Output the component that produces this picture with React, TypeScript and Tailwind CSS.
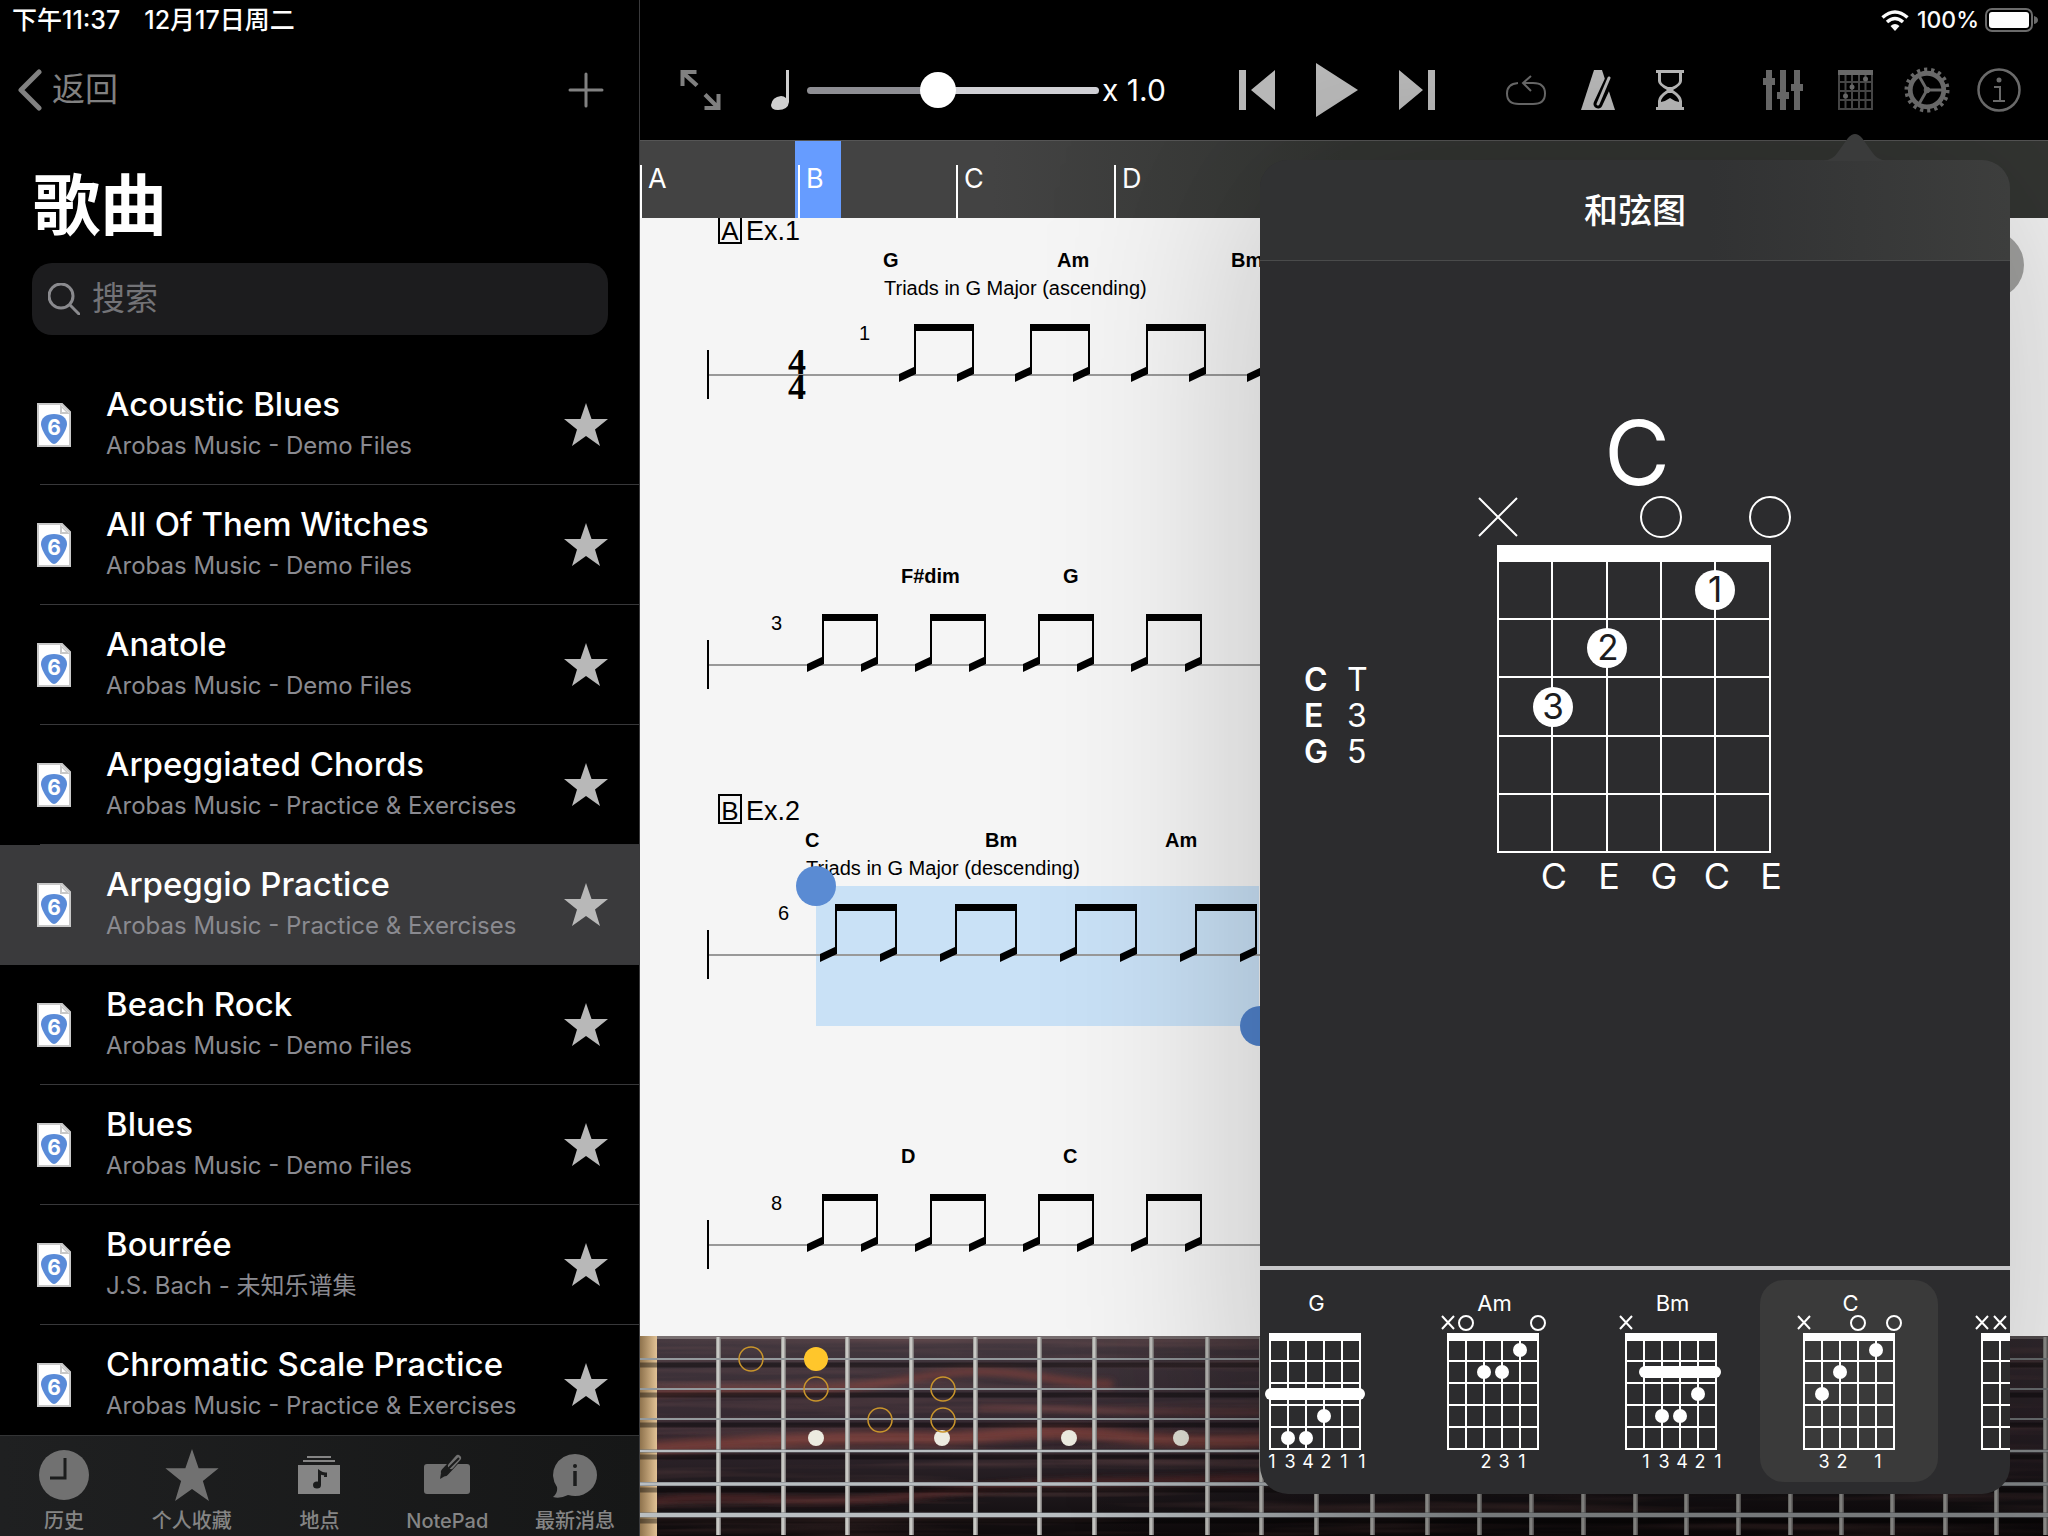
import React, { useState } from 'react';

interface Song {
    title: string;
    source: string;
}

interface Chord {
    name: string;
    marks: string[];
    dots: { string: number; fret: number }[];
    bar?: { from: number; fret: number };
    fingers: string[];
}

interface StaffLine {
    y: number;
    number: string;
    numberX: number;
    stems: number[];
    stemWidth: number;
    chords: { x: number; label: string }[];
    chordRise: number;
}

const SONGS: Song[] = [
    { title: 'Acoustic Blues', source: 'Arobas Music - Demo Files' },
    { title: 'All Of Them Witches', source: 'Arobas Music - Demo Files' },
    { title: 'Anatole', source: 'Arobas Music - Demo Files' },
    { title: 'Arpeggiated Chords', source: 'Arobas Music - Practice & Exercises' },
    { title: 'Arpeggio Practice', source: 'Arobas Music - Practice & Exercises' },
    { title: 'Beach Rock', source: 'Arobas Music - Demo Files' },
    { title: 'Blues', source: 'Arobas Music - Demo Files' },
    { title: 'Bourrée', source: 'J.S. Bach - 未知乐谱集' },
    { title: 'Chromatic Scale Practice', source: 'Arobas Music - Practice & Exercises' }
];

const SECTIONS = ['A', 'B', 'C', 'D'];

const CHORDS: Chord[] = [
    {
        name: 'G',
        marks: ['', '', '', '', '', ''],
        dots: [{ string: 3, fret: 4 }, { string: 1, fret: 5 }, { string: 2, fret: 5 }],
        bar: { from: 0, fret: 3 },
        fingers: ['1', '3', '4', '2', '1', '1']
    },
    {
        name: 'Am',
        marks: ['x', 'o', '', '', '', 'o'],
        dots: [{ string: 4, fret: 1 }, { string: 2, fret: 2 }, { string: 3, fret: 2 }],
        fingers: ['', '', '2', '3', '1', '']
    },
    {
        name: 'Bm',
        marks: ['x', '', '', '', '', ''],
        dots: [{ string: 4, fret: 3 }, { string: 2, fret: 4 }, { string: 3, fret: 4 }],
        bar: { from: 1, fret: 2 },
        fingers: ['', '1', '3', '4', '2', '1']
    },
    {
        name: 'C',
        marks: ['x', '', '', 'o', '', 'o'],
        dots: [{ string: 4, fret: 1 }, { string: 2, fret: 2 }, { string: 1, fret: 3 }],
        fingers: ['', '3', '2', '', '1', '']
    },
    {
        name: '',
        marks: ['x', 'x', '', '', '', ''],
        dots: [{ string: 3, fret: 2 }, { string: 5, fret: 2 }, { string: 4, fret: 3 }],
        fingers: []
    }
];

const STAFF_LINES: StaffLine[] = [
    {
        y: 157, number: '1', numberX: 219, stems: [275, 391, 507, 623], stemWidth: 58, chordRise: 108,
        chords: [{ x: 243, label: 'G' }, { x: 417, label: 'Am' }, { x: 591, label: 'Bm' }]
    },
    {
        y: 447, number: '3', numberX: 131, stems: [183, 291, 399, 507], stemWidth: 54, chordRise: 82,
        chords: [{ x: 261, label: 'F#dim' }, { x: 423, label: 'G' }]
    },
    {
        y: 737, number: '6', numberX: 138, stems: [196, 316, 436, 556], stemWidth: 60, chordRise: 108,
        chords: [{ x: 165, label: 'C' }, { x: 345, label: 'Bm' }, { x: 525, label: 'Am' }]
    },
    {
        y: 1027, number: '8', numberX: 131, stems: [183, 291, 399, 507], stemWidth: 54, chordRise: 82,
        chords: [{ x: 261, label: 'D' }, { x: 423, label: 'C' }]
    }
];

const FRETS = [79, 144, 208, 272, 336, 400, 455, 512, 568, 622, 677, 733, 788, 840, 892, 944, 996, 1047, 1099, 1151, 1202, 1253, 1306, 1357, 1406];
const STRINGS = [
    { y: 23, width: 2 },
    { y: 53, width: 2 },
    { y: 83, width: 2 },
    { y: 115, width: 3 },
    { y: 148, width: 4 },
    { y: 179, width: 5 }
];
const SCALE_NOTES = [[111, 23], [176, 53], [303, 53], [240, 84], [303, 84]];

const STAR = 'M22 0 27.5 16 44 16 31 26.500 36 43 22 33 8 43 13 26.500 0 16 16.500 16Z';

const FileIcon: React.FC = () => (
    <svg className="h-11 w-[34px] shrink-0" viewBox="0 0 34 44" aria-hidden="true">
        <path d="M1 1H25L33 9V43H1Z" fill="#fff" stroke="#c8c8c8" strokeWidth="2" />
        <path d="M23 1V11H33Z" fill="#c8c8c8" />
        <path d="M25 5V9H29Z" fill="#fff" />
        <path d="M17 11C25 11 30 15 30 21C30 27 21 41 17 41C13 41 4 27 4 21C4 15 9 11 17 11Z" fill="#5a8bd8" />
        <text x="17" y="32" textAnchor="middle" fill="#fff" fontSize="21" fontWeight="700">6</text>
    </svg>
);

const StarIcon: React.FC<{ className: string }> = ({ className }) => (
    <svg className={className} viewBox="0 0 44 43" fill="currentColor" aria-hidden="true">
        <path d={STAR} />
    </svg>
);

const TabClock = () => (
    <svg className="size-[50px]" viewBox="0 0 50 50" aria-hidden="true">
        <circle cx="25" cy="25" r="25" fill="currentColor" />
        <path d="M26 8V28H11" fill="none" stroke="#1b1c1c" strokeWidth="3" />
    </svg>
);

const TabPlaces = () => (
    <svg className="h-[38px] w-[42px]" viewBox="0 0 42 38" fill="#858585" aria-hidden="true">
        <path d="M9 0H33V2H9ZM5 4H37V6H5Z" />
        <path d="M0 9H42V38H0Z" />
        <ellipse cx="19" cy="29" rx="4" ry="3.500" fill="#1b1c1c" />
        <path d="M21.500 29V16Q24 18 27.500 18V21" fill="none" stroke="#1b1c1c" strokeWidth="3" />
    </svg>
);

const TabNotePad = () => (
    <svg className="h-[42px] w-[46px]" viewBox="0 0 46 42" aria-hidden="true">
        <rect x="0" y="10" width="46" height="30" rx="3" fill="currentColor" />
        <path d="M21 18 34 4" stroke="#1b1c1c" strokeWidth="8" strokeLinecap="round" />
        <path d="M27 12 34 4" stroke="currentColor" strokeWidth="6" strokeLinecap="round" />
        <path d="M21 18 35 4" stroke="#1b1c1c" strokeWidth="2" />
        <path d="M16 25 17 19 21 22Z" fill="#1b1c1c" />
    </svg>
);

const TabInfo = () => (
    <svg className="size-[46px]" viewBox="0 0 46 46" aria-hidden="true">
        <path d="M23 2A22 21 0 0 1 23 44Q20 44 16 43Q8 47 1 45Q6 41 5 35A22 21 0 0 1 23 2Z" fill="currentColor" />
        <path d="M23 19V34" stroke="#1b1c1c" strokeWidth="3.500" />
        <circle cx="23" cy="14" r="2" fill="#1b1c1c" />
    </svg>
);

const TABS = [
    { label: '历史', icon: <TabClock /> },
    { label: '个人收藏', icon: <StarIcon className="h-[52px] w-[54px]" /> },
    { label: '地点', icon: <TabPlaces /> },
    { label: 'NotePad', icon: <TabNotePad /> },
    { label: '最新消息', icon: <TabInfo /> }
];

const Sidebar: React.FC = () => {
    const [selected, setSelected] = useState('Arpeggio Practice');

    return (
        <aside className="flex w-[640px] shrink-0 flex-col border-r border-[#3a3a3c] bg-black">
            {/* Status bar */}
            <div className="flex h-10 items-center gap-6 pl-3 text-[25px] leading-8 font-medium">
                <span>下午11:37</span>
                <span>12月17日周二</span>
            </div>

            <div className="flex h-[100px] items-center justify-between pr-[35px] pl-[17px] text-[#818181]">
                <button type="button" className="flex items-center gap-2.5 text-[33px]">
                    <svg className="h-[42px] w-[25px]" viewBox="0 0 25 42" fill="none" stroke="currentColor" strokeWidth="5" strokeLinecap="round" strokeLinejoin="round" aria-hidden="true">
                        <path d="M22 3 4 21 22 39" />
                    </svg>
                    <span>返回</span>
                </button>
                <button type="button" aria-label="添加">
                    <svg className="size-9" viewBox="0 0 36 36" stroke="currentColor" strokeWidth="3" strokeLinecap="round" aria-hidden="true">
                        <path d="M18 2V34M2 18H34" />
                    </svg>
                </button>
            </div>

            <h1 className="mt-7 pl-[33px] text-[67px] leading-[76px] font-bold">歌曲</h1>

            <label className="mr-[31px] ml-8 mt-[19px] flex h-[72px] items-center gap-3 rounded-[20px] bg-[#1c1c1e] px-4">
                <svg className="size-8 shrink-0" viewBox="0 0 32 32" fill="none" stroke="#8a8a8e" strokeWidth="3" strokeLinecap="round" aria-hidden="true">
                    <circle cx="13" cy="13" r="12" />
                    <path d="M22 22 31 31" />
                </svg>
                <input
                    type="search"
                    aria-label="搜索"
                    placeholder="搜索"
                    className="min-w-0 flex-1 bg-transparent text-[33px] outline-none placeholder:text-[#737377]"
                />
            </label>

            <ul className="mt-[30px] min-h-0 flex-1 overflow-hidden">
                {SONGS.map((song) => (
                    <li key={song.title} className={selected === song.title ? 'bg-[#3a3a3c]' : ''}>
                        <div className="flex h-[119px] items-center pr-[31px] pl-[37px]">
                            <button
                                type="button"
                                className="flex flex-1 items-center gap-[35px] text-left"
                                onClick={() => setSelected(song.title)}
                            >
                                <FileIcon />
                                <span className="flex flex-col gap-[5px]">
                                    <span className="text-[33px] leading-[38px] font-medium">{song.title}</span>
                                    <span className="text-[24px] leading-9 text-[#8a8a90]">{song.source}</span>
                                </span>
                            </button>
                            <button type="button" aria-label={`收藏 ${song.title}`} className="text-[#b8b8b8]">
                                <StarIcon className="h-[43px] w-11" />
                            </button>
                        </div>
                        <div className="ml-10 h-px bg-[#38383a]" />
                    </li>
                ))}
            </ul>

            <nav className="grid h-[101px] shrink-0 grid-cols-5 border-t border-[#333435] bg-linear-to-r from-[#1f2021] to-[#161717] text-[#717171]">
                {TABS.map((tab) => (
                    <button key={tab.label} type="button" className="flex flex-col items-center pt-[11px]">
                        <span className="flex h-14 items-center">{tab.icon}</span>
                        <span className="mt-1 text-[20px] leading-7 font-medium text-[#858585]">{tab.label}</span>
                    </button>
                ))}
            </nav>
        </aside>
    );
};

const Toolbar: React.FC = () => {
    const [speed, setSpeed] = useState(44);

    return (
        <div className="flex h-[100px] items-center justify-between pr-[27px] pl-10 text-[#bdbdbd]">
            <div className="flex items-center">
                <button type="button" aria-label="全屏" className="mr-[50px] text-[#808080]">
                    <svg className="h-10 w-[41px]" viewBox="0 0 40 40" fill="currentColor" aria-hidden="true">
                        <path d="M0 0H16V4H7L18 14 15 17 4 7V16H0ZM40 40H24V36H33L23 26 26 23 36 33V24H40Z" />
                    </svg>
                </button>
                <svg className="mr-[18px] h-10 w-[18px]" viewBox="0 0 18 40" fill="#cfcfcf" aria-hidden="true">
                    <path d="M15 0H18V32Q17 40 7 40Q0 40 0 35Q1 27 10 26Q13 26 15 28Z" />
                </svg>
                <input
                    type="range"
                    aria-label="速度"
                    min={0}
                    max={100}
                    value={speed}
                    onChange={(e) => setSpeed(Number(e.target.value))}
                    className="h-[7px] w-[292px] appearance-none rounded-full bg-linear-to-r from-[#8e8e93] from-45% to-[#d0d0d5] to-45% [&::-webkit-slider-thumb]:size-9 [&::-webkit-slider-thumb]:appearance-none [&::-webkit-slider-thumb]:rounded-full [&::-webkit-slider-thumb]:bg-white"
                />
                <span className="ml-[3px] min-w-[68px] text-[30px] text-white">x 1.0</span>
            </div>

            <div className="flex items-center gap-[41px]">
                <button type="button" aria-label="上一个">
                    <svg className="h-10 w-9" viewBox="0 0 36 40" fill="currentColor" aria-hidden="true">
                        <path d="M0 0H7V40H0ZM36 0V40L12 20Z" />
                    </svg>
                </button>
                <button type="button" aria-label="播放">
                    <svg className="h-[54px] w-[42px]" viewBox="0 0 42 54" fill="currentColor" aria-hidden="true">
                        <path d="M0 0 42 27 0 54Z" />
                    </svg>
                </button>
                <button type="button" aria-label="下一个">
                    <svg className="h-10 w-9" viewBox="0 0 36 40" fill="currentColor" aria-hidden="true">
                        <path d="M29 0H36V40H29ZM0 0 24 20 0 40Z" />
                    </svg>
                </button>
            </div>

            <div className="flex items-center gap-7">
                <button type="button" aria-label="循环" className="flex w-11 justify-center text-[#6c6c6c]">
                    <svg className="h-[30px] w-10" viewBox="0 0 40 30" fill="none" stroke="currentColor" strokeWidth="2" aria-hidden="true">
                        <path d="M12 8Q1 9 1 18.500Q1 29 13 29H27Q39 29 39 18.500Q39 8 27 8H17" />
                        <path d="M25 1 17 8 25 16" />
                    </svg>
                </button>
                <button type="button" aria-label="节拍器" className="flex w-11 justify-center">
                    <svg className="h-10 w-[34px]" viewBox="0 0 34 40" aria-hidden="true">
                        <path d="M13 0H21L34 40H0Z" fill="currentColor" />
                        <path d="M31 4 17 34" stroke="#000" strokeWidth="9" strokeLinecap="round" />
                        <path d="M28 8 17 34" stroke="currentColor" strokeWidth="3" strokeLinecap="round" />
                    </svg>
                </button>
                <button type="button" aria-label="倒计时" className="flex w-11 justify-center">
                    <svg className="h-10 w-7" viewBox="0 0 28 40" fill="currentColor" aria-hidden="true">
                        <path d="M0 0H28V3H26V11Q26 15 17 20Q26 26 26 31V37H28V40H0V37H2V31Q2 26 11 20Q2 15 2 11V3H0ZM5 3V11Q5 14 12 17H16Q23 14 23 11V3ZM12 23Q5 27 5 32Q10 31 14 28Q18 31 23 32Q23 27 16 23Z" fillRule="evenodd" />
                    </svg>
                </button>
            </div>

            <div className="flex items-center gap-7 text-[#6d6d6d]">
                <button type="button" aria-label="混音器" className="flex w-11 justify-center">
                    <svg className="h-10 w-10" viewBox="0 0 40 40" fill="currentColor" aria-hidden="true">
                        <path d="M3 0H9V40H3ZM17 0H23V40H17ZM31 0H37V40H31ZM0 8H12V15H0ZM14 22H26V29H14ZM28 14H40V21H28Z" />
                    </svg>
                </button>
                <button type="button" aria-label="和弦图" className="flex w-11 justify-center">
                    <svg className="h-10 w-[35px]" viewBox="0 0 35 40" fill="currentColor" aria-hidden="true">
                        <path d="M1 3V39H34V3M7.500 3V39M14 3V39M21 3V39M27.500 3V39M1 12H34M1 21H34M1 30H34" fill="none" stroke="#4a4a4a" strokeWidth="2" />
                        <path d="M0 0H35V5H0Z" />
                        <circle cx="27.500" cy="9" r="2.500" />
                        <circle cx="14" cy="17" r="2.500" />
                        <circle cx="7.500" cy="26" r="2.500" />
                    </svg>
                </button>
                <button type="button" aria-label="设置" className="flex w-11 justify-center">
                    <svg className="size-[46px] shrink-0" viewBox="0 0 48 48" fill="none" stroke="currentColor" aria-hidden="true">
                        <circle cx="24" cy="24" r="20.500" strokeWidth="6" strokeDasharray="3.200 3.955" />
                        <circle cx="24" cy="24" r="17.500" strokeWidth="5" />
                        <path d="M24 24H40M24 24 16 10M24 24 16 38" strokeWidth="3" />
                        <circle cx="24" cy="24" r="3" fill="currentColor" />
                    </svg>
                </button>
                <button type="button" aria-label="信息" className="flex w-11 justify-center">
                    <svg className="size-11" viewBox="0 0 44 44" fill="none" stroke="currentColor" strokeWidth="2" aria-hidden="true">
                        <circle cx="22" cy="22" r="20.500" strokeWidth="2.500" />
                        <path d="M17 19H23V33M16 33H28" />
                        <circle cx="22" cy="12" r="2.500" fill="currentColor" stroke="none" />
                    </svg>
                </button>
            </div>
        </div>
    );
};

const SectionBar: React.FC = () => (
    <div className="relative flex h-[78px] shrink-0 border-t border-[#555] bg-linear-to-r from-[#434343] from-25% to-[#333532] to-50%">
        <div className="absolute inset-y-0 left-[155px] w-[46px] bg-[#669cff]" />
        {SECTIONS.map((section) => (
            <div key={section} className="relative flex w-[158px] items-end">
                <button type="button" className="h-[53px] w-full border-l-2 border-white pb-[26px] pl-1.5 text-left text-[27px] leading-7">
                    {section}
                </button>
            </div>
        ))}
    </div>
);

const RehearsalMark: React.FC<{ y: number; letter: string; text: string }> = ({ y, letter, text }) => (
    <g>
        <rect x="79" y={y - 25} width="22" height="28" fill="none" stroke="#000" strokeWidth="2" />
        <text x="90" y={y} textAnchor="middle" fontSize="26">{letter}</text>
        <text x="106" y={y} fontSize="27">{text}</text>
    </g>
);

const Score: React.FC = () => (
    <div className="relative min-h-0 flex-1 overflow-hidden bg-[#f5f5f5]">
        <svg className="block h-full w-full font-['Liberation_Sans',Arial,sans-serif]" aria-label="乐谱">
            <rect x="176" y="668" width="443" height="140" fill="#c9e1f6" />
            <RehearsalMark y={22} letter="A" text="Ex.1" />
            <RehearsalMark y={602} letter="B" text="Ex.2" />
            <text x="244" y="77" fontSize="20">Triads in G Major (ascending)</text>
            <text x="166" y="657" fontSize="20">Triads in G Major (descending)</text>

            {STAFF_LINES.map((line) => (
                <g key={line.y}>
                    <path d={`M67 ${line.y}H640`} stroke="#999" strokeWidth="2" />
                    <path d={`M68 ${line.y - 25}V${line.y + 24}`} stroke="#000" strokeWidth="2" />
                    <text x={line.numberX} y={line.y - 35} fontSize="20">{line.number}</text>
                    {line.chords.map((chord) => (
                        <text key={chord.x} x={chord.x} y={line.y - line.chordRise} fontSize="20" fontWeight="700">{chord.label}</text>
                    ))}
                    {line.stems.map((x) => (
                        <g key={x}>
                            <rect x={x - 1} y={line.y - 51} width={line.stemWidth + 2} height="7" />
                            {[x, x + line.stemWidth].map((stem) => (
                                <g key={stem}>
                                    <path d={`M${stem} ${line.y - 46}V${line.y - 2}`} stroke="#000" strokeWidth="2" />
                                    <path d={`M${stem - 16} ${line.y - 1}L${stem + 1} ${line.y - 9}V${line.y - 1}L${stem - 16} ${line.y + 7}Z`} />
                                </g>
                            ))}
                        </g>
                    ))}
                </g>
            ))}

            {/* Time signature */}
            <g fontSize="36" fontWeight="700" textAnchor="middle" className="font-['Liberation_Serif',serif]">
                <text x="157" y="156">4</text>
                <text x="157" y="181">4</text>
            </g>

            {/* Selection handles */}
            <circle cx="176" cy="668" r="20" fill="#5a8bd3" />
            <circle cx="620" cy="808" r="20" fill="#5082cb" />
        </svg>
        <button type="button" aria-label="滚动" className="absolute top-[13px] right-6 size-[68px] rounded-full bg-[#a3a3a1]" />
    </div>
);

const Fretboard: React.FC = () => (
    <svg className="block h-[200px] w-full shrink-0" aria-label="指板">
        <defs>
            <linearGradient id="board" x1="0" y1="0" x2="0" y2="1">
                <stop offset="0" stopColor="#43383f" />
                <stop offset="0.5" stopColor="#33272f" />
                <stop offset="0.75" stopColor="#201a1e" />
                <stop offset="1" stopColor="#0e0a0b" />
            </linearGradient>
            <linearGradient id="fret" x1="0" x2="1">
                <stop offset="0" stopColor="#8c8c88" />
                <stop offset="0.4" stopColor="#dcdcd8" />
                <stop offset="1" stopColor="#6e6a6a" />
            </linearGradient>
            <linearGradient id="nut" x1="0" x2="1">
                <stop offset="0" stopColor="#8f734d" />
                <stop offset="1" stopColor="#e2c295" />
            </linearGradient>
            <linearGradient id="dim" x1="0" x2="1">
                <stop offset="0.3" stopColor="#000" stopOpacity="0" />
                <stop offset="0.6" stopColor="#000" stopOpacity="0.3" />
            </linearGradient>
            <filter id="grain" x="0" y="0" width="100%" height="100%">
                <feTurbulence type="fractalNoise" baseFrequency="0.003 0.09" numOctaves="3" seed="8" />
                <feColorMatrix values="0 0 0 0 0.45  0 0 0 0 0.18  0 0 0 0 0.16  2.4 0 0 0 -1.1" />
            </filter>
            <filter id="soft" x="-5%" y="-50%" width="110%" height="200%">
                <feGaussianBlur stdDeviation="3" />
            </filter>
        </defs>
        <rect width="100%" height="200" fill="url(#board)" />
        <g fill="none" stroke="#7c3f3a" strokeLinecap="round" filter="url(#soft)" opacity="0.85">
            <path d="M16 57C120 50 180 58 250 46S340 34 370 37S430 48 470 48" strokeWidth="7" />
            <path d="M16 112C120 106 200 100 280 102S380 90 480 100S620 104 800 98" strokeWidth="13" />
            <path d="M16 165C90 156 180 172 290 158S430 148 620 142" strokeWidth="6" stroke="#5e2c29" />
            <path d="M340 72C400 70 500 78 620 76" strokeWidth="3" />
        </g>
        <rect width="100%" height="200" filter="url(#grain)" opacity="0.25" />
        <rect width="100%" height="3" fill="#8c8484" opacity="0.7" />
        <rect width="17" height="200" fill="url(#nut)" />

        {STRINGS.map((string) => (
            <path key={string.y} d={`M0 ${string.y + 6}H1600`} stroke="#000" strokeOpacity="0.4" strokeWidth="5" />
        ))}
        {FRETS.map((x) => (
            <rect key={x} x={x - 3} y="1" width="5" height="198" fill="url(#fret)" />
        ))}
        {[176, 302, 429, 541].map((x) => (
            <circle key={x} cx={x} cy="102" r="8" fill="#ecebe0" />
        ))}
        {STRINGS.map((string) => (
            <g key={string.y}>
                <path d={`M0 ${string.y}H1600`} stroke="#70767a" strokeWidth={string.width} />
                <path d={`M0 ${string.y}H1600`} stroke="#b9bec1" strokeWidth={string.width - 1} />
            </g>
        ))}
        <rect width="100%" height="200" fill="url(#dim)" />

        {SCALE_NOTES.map(([x, y]) => (
            <circle key={`${x}-${y}`} cx={x} cy={y} r="12" fill="none" stroke="#c9952b" strokeWidth="1.500" />
        ))}
        <circle cx="176" cy="23" r="12" fill="#ffc62b" />
    </svg>
);

const ChordDiagram: React.FC = () => (
    <svg className="h-[500px] w-[340px]" viewBox="0 0 340 500" fill="none" stroke="#fff" strokeWidth="2" aria-label="C">
        <text x="167" y="75" textAnchor="middle" fontSize="90" fill="#fff" stroke="none">C</text>
        <path d="M9 88 47 126M47 88 9 126" />
        <circle cx="191" cy="107" r="20" />
        <circle cx="300" cy="107" r="20" />
        <rect x="27" y="135" width="274" height="17" fill="#fff" stroke="none" />
        <path d="M28 150V442M82 150V442M137 150V442M191 150V442M245 150V442M300 150V442" />
        <path d="M27 209H301M27 267H301M27 326H301M27 384H301M27 442H301" />
        <g fill="#fff" stroke="none">
            <circle cx="245" cy="180" r="20" />
            <circle cx="137" cy="238" r="20" />
            <circle cx="83" cy="297" r="20" />
        </g>
        <g fill="#1c1c1e" stroke="none" fontSize="35" textAnchor="middle">
            <text x="245" y="192">1</text>
            <text x="138" y="250">2</text>
            <text x="83" y="309">3</text>
        </g>
        <g fill="#fff" stroke="none" fontSize="36" textAnchor="middle">
            <text x="84" y="479">C</text>
            <text x="139" y="479">E</text>
            <text x="194" y="479">G</text>
            <text x="247" y="479">C</text>
            <text x="301" y="479">E</text>
        </g>
    </svg>
);

const ChordThumb: React.FC<{ chord: Chord }> = ({ chord }) => (
    <svg className="h-[156px] w-[116px]" viewBox="0 0 116 156" fill="none" stroke="#fff" strokeWidth="2" aria-hidden="true">
        {chord.marks.map((mark, i) => {
            const x = 13 + i * 18;
            if (mark === 'x') return <path key={i} d={`M${x - 6} 1L${x + 6} 14M${x + 6} 1L${x - 6} 14`} />;
            if (mark === 'o') return <circle key={i} cx={x} cy="8" r="7" />;
            return null;
        })}
        <rect x="12" y="18" width="92" height="8" fill="#fff" stroke="none" />
        <path d="M13 24V134M31 24V134M49 24V134M67 24V134M85 24V134M103 24V134" />
        <path d="M12 46H104M12 68H104M12 90H104M12 112H104M12 134H104" />
        {chord.bar && (
            <rect
                x={8 + chord.bar.from * 18}
                y={7 + chord.bar.fret * 22}
                width={100 - chord.bar.from * 18}
                height="12"
                rx="6"
                fill="#fff"
                stroke="none"
            />
        )}
        {chord.dots.map((dot) => (
            <circle key={`${dot.string}-${dot.fret}`} cx={13 + dot.string * 18} cy={13 + dot.fret * 22} r="7" fill="#fff" stroke="none" />
        ))}
        {chord.fingers.map((finger, i) => (
            <text key={i} x={15 + i * 18} y="153" textAnchor="middle" fontSize="18" fill="#fff" stroke="none">{finger}</text>
        ))}
    </svg>
);

const ChordPopover: React.FC = () => {
    const [active, setActive] = useState('C');

    return (
        <section className="absolute top-[160px] right-[38px] bottom-[42px] flex w-[750px] flex-col rounded-[28px] bg-[#2c2c2e] shadow-[0_0_220px_rgba(0,0,0,0.23)]" aria-label="和弦图">
            <svg className="absolute -top-[26px] right-[123px] h-[27px] w-[64px]" viewBox="0 0 64 27" fill="#3a3b3b" aria-hidden="true">
                <path d="M0 27Q10 26 15 18L25 4Q32-4 39 4L49 18Q54 26 64 27Z" />
            </svg>
            <header className="flex h-[101px] items-center justify-center rounded-t-[28px] border-b border-[#4a4b4b] bg-linear-to-r from-[#313233] from-60% to-[#3d3e3d]">
                <h2 className="text-[34px] font-medium">和弦图</h2>
            </header>

            <div className="flex min-h-0 flex-1 items-start">
                <dl className="mt-[401px] ml-11 grid w-[166px] grid-cols-[43px_1fr] text-[32px] leading-9">
                    <dt className="font-semibold">C</dt>
                    <dd>T</dd>
                    <dt className="font-semibold">E</dt>
                    <dd>3</dd>
                    <dt className="font-semibold">G</dt>
                    <dd>5</dd>
                </dl>
                <div className="mt-[149px]">
                    <ChordDiagram />
                </div>
            </div>

            <div className="h-[228px] shrink-0 overflow-hidden rounded-b-[28px] border-t-4 border-[#c7c7c9] pt-2.5">
                <div className="-ml-[34px] flex">
                    {CHORDS.map((chord) => (
                        <button
                            key={chord.name}
                            type="button"
                            onClick={() => setActive(chord.name)}
                            className={`flex h-[202px] w-[178px] shrink-0 flex-col items-center rounded-[24px] pt-[11px] ${active === chord.name ? 'bg-[#3a3a3a]' : ''}`}
                        >
                            <span className="h-6 pl-[3px] text-[22px] leading-6">{chord.name}</span>
                            <ChordThumb chord={chord} />
                        </button>
                    ))}
                </div>
            </div>
        </section>
    );
};

export default function App() {
    return (
        <div className="relative flex h-screen overflow-hidden bg-black font-[Inter,'Noto_Sans_CJK_SC',sans-serif] text-white">
            <Sidebar />
            <main className="flex min-w-0 flex-1 flex-col">
                {/* Status bar */}
                <div className="flex h-10 shrink-0 items-center justify-end pr-2.5 text-[23px] font-medium">
                    <svg className="mr-2 h-[21px] w-7" viewBox="0 0 28 21" fill="none" stroke="#fff" strokeWidth="3.500" aria-hidden="true">
                        <path d="M1.500 7.500Q14-3.500 26.500 7.500M6 12Q14 5 22 12" />
                        <path d="M14 21 9.500 16Q14 12 18.500 16Z" fill="#fff" stroke="none" />
                    </svg>
                    <span>100%</span>
                    <svg className="ml-1.5 h-6 w-[53px]" viewBox="0 0 53 24" aria-hidden="true">
                        <rect x="1" y="1" width="46" height="22" rx="6" fill="none" stroke="#6c6c6c" strokeWidth="2" />
                        <rect x="4" y="4" width="40" height="16" rx="3" fill="#fff" />
                        <path d="M49 8Q53 9 53 12Q53 15 49 16Z" fill="#6c6c6c" />
                    </svg>
                </div>
                <Toolbar />
                <SectionBar />
                <Score />
                <Fretboard />
            </main>
            <ChordPopover />
        </div>
    );
}
